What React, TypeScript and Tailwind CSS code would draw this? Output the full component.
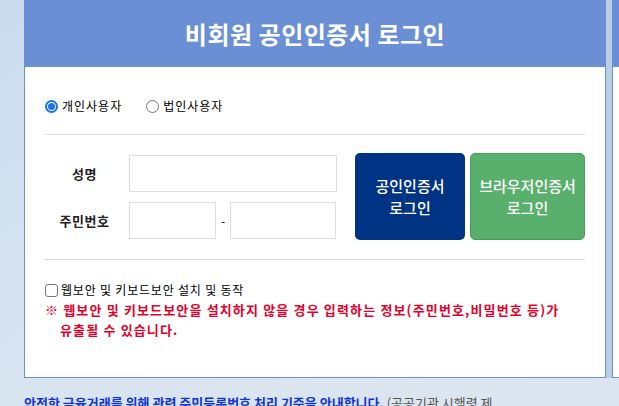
import React from "react";

const font = { fontFamily: '"Noto Sans CJK KR", "Noto Sans", sans-serif' };

function Radio({ checked }: { checked: boolean }) {
  return checked ? (
    <span className="w-[13px] h-[13px] rounded-full border-2 border-[#1a73e8] bg-white flex items-center justify-center shrink-0">
      <span className="w-[7px] h-[7px] rounded-full bg-[#1a73e8]" />
    </span>
  ) : (
    <span className="w-[13px] h-[13px] rounded-full border border-[#767676] bg-white shrink-0" />
  );
}

export default function App() {
  return (
    <div
      className="w-[619px] h-[406px] overflow-hidden bg-gradient-to-br from-[#cadcee] via-[#d8e4f0] to-[#dde6f0] relative"
      style={font}
    >
      <div className="flex pl-[24px] h-[378px]">
        <div className="w-[582px] shrink-0 flex flex-col border-l border-r border-b border-[#6a8fd4] bg-white">
          <div className="h-[67px] -mx-px bg-[#6a8fd4] flex items-center justify-center text-white text-[24px] font-bold tracking-[0.5px]">
            비회원 공인인증서 로그인
          </div>
          <div className="px-[20px]">
            <div className="pt-[29px] h-[49px] flex items-center gap-[4px] text-[12px] tracking-[1px] text-black">
              <Radio checked />
              <span className="mr-[20px]">개인사용자</span>
              <Radio checked={false} />
              <span>법인사용자</span>
            </div>
            <div className="mt-[18px] h-px bg-[#dcdcdc]" />
            <div className="mt-[18px] flex">
              <div className="flex flex-col w-[310px]">
                <div className="mt-[2px] flex items-center h-[37px]">
                  <div className="w-[79px] text-center text-[13px] font-bold text-[#222] tracking-[0.5px]">성명</div>
                  <div className="ml-[5px] w-[208px] h-[37px] border border-[#dedede] bg-white" />
                </div>
                <div className="mt-[10px] flex items-center h-[37px]">
                  <div className="w-[79px] text-center text-[13px] font-bold text-[#222] tracking-[0.5px]">주민번호</div>
                  <div className="ml-[5px] w-[87px] h-[37px] border border-[#dedede] bg-white" />
                  <div className="w-[14px] text-center text-[12px] text-black">-</div>
                  <div className="w-[106px] h-[37px] border border-[#dedede] bg-white" />
                </div>
              </div>
              <div className="flex gap-[5px]">
                <button className="w-[110px] h-[87px] rounded-[5px] bg-[#003383] text-white text-[15px] font-medium leading-[22px] flex items-center justify-center text-center">
                  공인인증서
                  <br />
                  로그인
                </button>
                <button className="w-[115px] h-[87px] rounded-[5px] bg-[#59b06c] border border-[#4a9b5c] text-white text-[15px] font-medium leading-[22px] flex items-center justify-center text-center">
                  브라우저인증서
                  <br />
                  로그인
                </button>
              </div>
            </div>
            <div className="mt-[19px] h-px bg-[#dcdcdc]" />
            <div className="mt-[22px] h-[16px] flex items-center gap-[3px] text-[12px] tracking-[0.8px] text-black">
              <span className="w-[13px] h-[13px] rounded-[3px] border border-[#767676] bg-white shrink-0" />
              <span>웹보안 및 키보드보안 설치 및 동작</span>
            </div>
            <div className="mt-[2px] text-[13px] font-bold text-[#e3002b] leading-[20px] tracking-[1.15px] whitespace-nowrap">
              <div>※ 웹보안 및 키보드보안을 설치하지 않을 경우 입력하는 정보(주민번호,비밀번호 등)가</div>
              <div className="pl-[15px]">유출될 수 있습니다.</div>
            </div>
          </div>
        </div>
        <div className="w-[6px] shrink-0 bg-[#bacfe6]" />
        <div className="w-[40px] shrink-0 flex flex-col border-l border-b border-[#6a8fd4] bg-white">
          <div className="h-[67px] bg-[#6a8fd4]" />
        </div>
      </div>
      <div className="pl-[24px] mt-[17px] whitespace-nowrap text-[13px] leading-[16px]">
        <span className="font-bold text-[#1133dd]">안전한 금융거래를 위해 관련 주민등록번호 처리 기준을 안내합니다.</span>
        <span className="text-[#555]"> (공공기관 시행령 제</span>
      </div>
    </div>
  );
}
